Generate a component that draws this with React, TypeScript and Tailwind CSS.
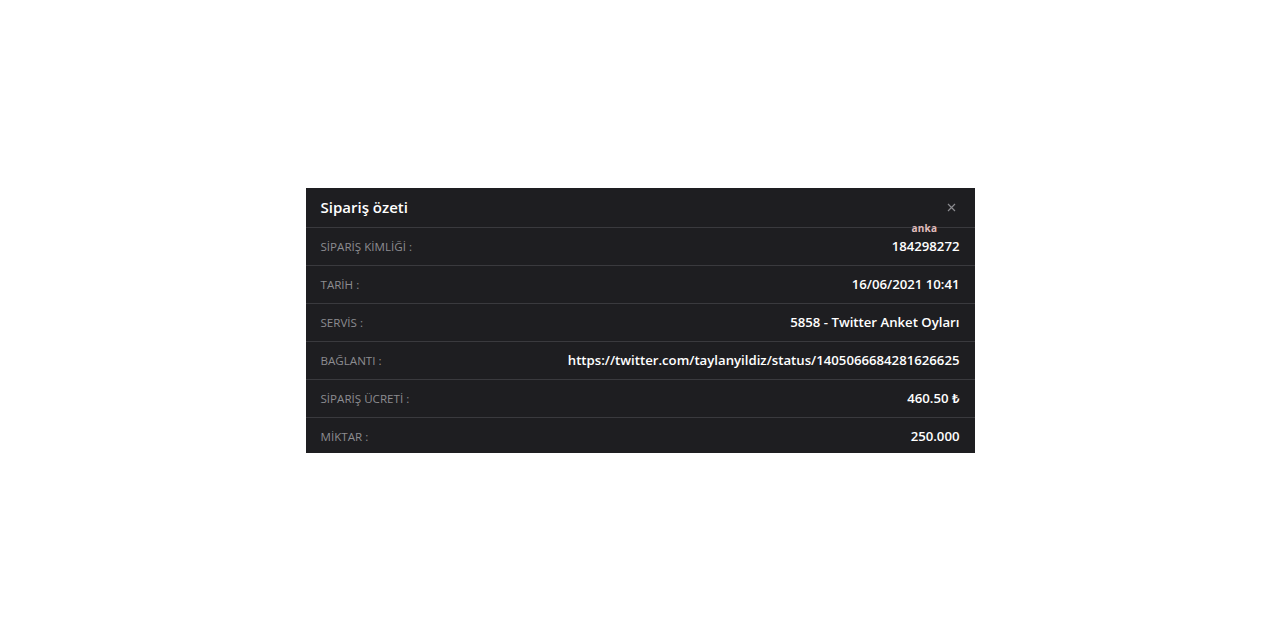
import React from 'react';

const rows = [
  { label: 'SİPARİŞ KİMLİĞİ :', value: '184298272' },
  { label: 'TARİH :', value: '16/06/2021 10:41' },
  { label: 'SERVİS :', value: '5858 - Twitter Anket Oyları' },
  { label: 'BAĞLANTI :', value: 'https://twitter.com/taylanyildiz/status/1405066684281626625' },
  { label: 'SİPARİŞ ÜCRETİ :', value: '460.50 ₺' },
  { label: 'MİKTAR :', value: '250.000' },
];

export default function App() {
  return (
    <div
      className="w-[1280px] h-[640px] bg-white flex justify-center pt-[188px]"
      style={{ fontFamily: '"Open Sans", "Noto Sans", sans-serif' }}
    >
      <div className="relative w-[669px] h-[265px] bg-[#1e1e21] overflow-hidden">
        <header className="flex items-center justify-between h-[40px] px-[15px] border-b border-[#3a3a3e]">
          <h2 className="text-[15px] font-semibold text-white">Sipariş özeti</h2>
          <button className="text-[#8a8a8e] mr-[4px]">
            <svg width="9" height="9" viewBox="0 0 9 9" stroke="currentColor" strokeWidth="1.2">
              <path d="M1 1 L8 8 M8 1 L1 8" />
            </svg>
          </button>
        </header>

        <span className="absolute left-[606px] top-[35px] text-[10px] font-bold leading-none text-[#e0bcbc] tracking-wide">
          anka
        </span>

        <div>
          {rows.map((row, index) => (
            <div
              key={index}
              className="flex items-center justify-between h-[38px] px-[15px] border-b border-[#3a3a3e] last:border-b-0"
            >
              <span className="text-[11.6px] text-[#8c8c90]">{row.label}</span>
              <span className="text-[13.2px] font-semibold text-white">{row.value}</span>
            </div>
          ))}
        </div>
      </div>
    </div>
  );
}
